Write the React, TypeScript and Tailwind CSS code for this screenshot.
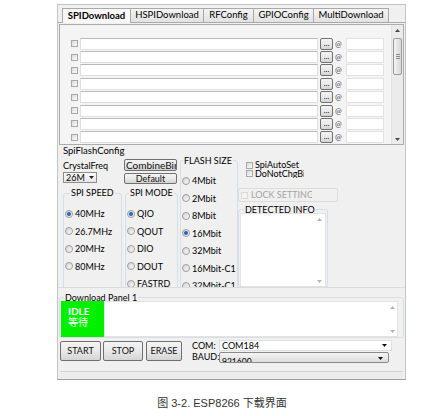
import React from 'react';

const UI = "font-['Lato','Noto_Sans_CJK_SC',sans-serif]";

function Tri({ up, color = '#4a4a4a' }: { up?: boolean; color?: string }) {
  return (
    <svg width="5" height="3" viewBox="0 0 5 3">
      <path d={up ? 'M0 3L2.5 0L5 3Z' : 'M0 0L5 0L2.5 3Z'} fill={color} />
    </svg>
  );
}

function Check({ disabled }: { disabled?: boolean }) {
  return (
    <span
      className={`block w-[7px] h-[7px] shrink-0 border ${
        disabled ? 'border-[#dadada] bg-[#f3f3f3]' : 'border-[#a8a8a8] bg-linear-to-br from-[#dadada] to-[#fbfbfb]'
      }`}
    />
  );
}

function Radio({ on }: { on?: boolean }) {
  return (
    <span className="flex w-[8px] h-[8px] shrink-0 items-center justify-center rounded-full border border-[#9c9c9c] bg-linear-to-br from-[#d3d3d3] to-[#fbfbfb]">
      {on && <span className="block w-[4px] h-[4px] rounded-full bg-[#2563c0]" />}
    </span>
  );
}

function VScroll({ thumb, light, className = '' }: { thumb?: boolean; light?: boolean; className?: string }) {
  const c = light ? '#b4b4b4' : '#4a4a4a';
  return (
    <div className={`flex flex-col items-center ${className}`}>
      <div className="h-[10px] flex items-center justify-center">
        <Tri up color={c} />
      </div>
      {thumb && (
        <div className="mt-[3px] w-[9px] h-[37px] rounded-[2px] border border-[#9a9a9a] bg-linear-to-r from-[#f3f3f3] to-[#d9d9d9] flex flex-col items-center justify-center gap-[1px]">
          <span className="block w-[4px] h-px bg-[#8a8a8a]" />
          <span className="block w-[4px] h-px bg-[#8a8a8a]" />
          <span className="block w-[4px] h-px bg-[#8a8a8a]" />
        </div>
      )}
      <div className="flex-1" />
      <div className="h-[10px] flex items-center justify-center">
        <Tri color={c} />
      </div>
    </div>
  );
}

function RadioRow({ label, on }: { label: string; on?: boolean }) {
  return (
    <div className="flex items-center h-[17.5px] gap-[2px] whitespace-nowrap">
      <Radio on={on} />
      <span>{label}</span>
    </div>
  );
}

const tabs = [
  { label: 'SPIDownload', w: 'w-[69px]', active: true },
  { label: 'HSPIDownload', w: 'w-[74px]' },
  { label: 'RFConfig', w: 'w-[51px]' },
  { label: 'GPIOConfig', w: 'w-[61px]' },
  { label: 'MultiDownload', w: 'w-[76px]' },
];

const btn =
  'flex items-center justify-center border border-[#707070] rounded-[2px] bg-linear-to-b from-[#f4f4f4] via-[#e9e9e9] to-[#d4d4d4] text-[#111]';

export default function App() {
  return (
    <div className={`w-[444px] h-[416px] bg-white pt-[4px] pl-[57px] text-[9px] text-black ${UI}`}>
      <div className="w-[349px] h-[376px] bg-[#f0f0f0] border border-[#c4c4c4] border-b-[#9c9c9c] flex flex-col">
        {/* tabs */}
        <div className="h-[17px] pl-[4px] flex items-end">
          {tabs.map((t) => (
            <div
              key={t.label}
              className={`${t.w} flex items-center justify-center border border-b-0 border-[#a9a9a9] text-[9.5px] whitespace-nowrap ${
                t.active
                  ? 'relative z-10 h-[15px] -mb-px bg-[#f8f8f8] font-bold'
                  : 'h-[14px] -ml-px bg-linear-to-b from-[#f4f4f4] to-[#e2e2e2]'
              }`}
            >
              {t.label}
            </div>
          ))}
        </div>

        <div className="flex-1 flex flex-col border-t border-[#a9a9a9] pt-px">
          {/* file list */}
          <div className="mx-px h-[121px] border border-[#adadad] bg-[#f4f4f4] flex">
            <div className="flex-1 pt-[12px] pl-[11px] flex flex-col">
              {Array.from({ length: 8 }).map((_, i) => (
                <div key={i} className="h-[13.5px] flex items-center">
                  <Check />
                  <div className="ml-[2px] w-[238px] h-[12px] bg-white border border-[#dfdfdf] border-t-[#b9b9b9]" />
                  <div className={`${btn} ml-[2px] w-[13px] h-[12px] text-[8px] leading-none pb-[2px]`}>...</div>
                  <span className="ml-[2px] w-[9px] text-[8px] text-[#444]">@</span>
                  <div className="ml-[2px] w-[38px] h-[12px] bg-white border border-[#e2e2e2]" />
                </div>
              ))}
            </div>
            <VScroll thumb className="w-[12px] bg-[#ebebeb] border-l border-[#e2e2e2]" />
          </div>

          {/* SpiFlashConfig */}
          <div className="h-[143px] overflow-hidden border-b border-[#dcdcdc]">
            <div className="h-[11px] leading-[11px] pl-[5px] flex items-center text-[9.5px]">
              <span>SpiFlashConfig</span>
            </div>
            <div className="flex pl-[5px]">
              {/* col 1 */}
              <div className="w-[60px] flex flex-col">
                <div className="mt-[4px] h-[11px] leading-[11px]">CrystalFreq</div>
                <div className="mt-[1px] w-[34px] h-[11px] border border-[#8c8c8c] bg-linear-to-b from-[#fafafa] to-[#e6e6e6] flex items-center justify-between px-[2px]">
                  <span className="leading-none">26M</span>
                  <Tri color="#222" />
                </div>
                <fieldset className="mt-[5px] w-[59px] h-[120px] border border-[#d5dfe5] rounded-[3px] px-px">
                  <legend className="ml-[5px] px-px h-[10px] leading-[10px] whitespace-nowrap">SPI SPEED</legend>
                  <div className="pt-[7px]">
                    <RadioRow label="40MHz" on />
                    <RadioRow label="26.7MHz" />
                    <RadioRow label="20MHz" />
                    <RadioRow label="80MHz" />
                  </div>
                </fieldset>
              </div>

              {/* col 2 */}
              <div className="ml-px w-[54px] flex flex-col">
                <div className={`${btn} mt-[3px] w-[53px] h-[12px] overflow-hidden whitespace-nowrap justify-start pl-[1px] text-[10px]`}>CombineBin</div>
                <div className={`${btn} mt-[2px] w-[53px] h-[11px]`}>Default</div>
                <fieldset className="mt-[4px] ml-px w-[53px] h-[120px] border border-[#d5dfe5] rounded-[3px] px-px">
                  <legend className="ml-[2px] px-px h-[10px] leading-[10px] whitespace-nowrap">SPI MODE</legend>
                  <div className="pt-[7px]">
                    <RadioRow label="QIO" on />
                    <RadioRow label="QOUT" />
                    <RadioRow label="DIO" />
                    <RadioRow label="DOUT" />
                    <RadioRow label="FASTRD" />
                  </div>
                </fieldset>
              </div>

              {/* col 3 */}
              <div className="ml-[2px] w-[57px]">
                <fieldset className="w-[57px] h-[160px] border border-[#d5dfe5] rounded-[3px] px-px overflow-hidden">
                  <legend className="ml-[1px] px-px h-[9px] leading-[9px] whitespace-nowrap">FLASH SIZE</legend>
                  <div className="pt-[7px]">
                    <RadioRow label="4Mbit" />
                    <RadioRow label="2Mbit" />
                    <RadioRow label="8Mbit" />
                    <RadioRow label="16Mbit" on />
                    <RadioRow label="32Mbit" />
                    <RadioRow label="16Mbit-C1" />
                    <RadioRow label="32Mbit-C1" />
                  </div>
                </fieldset>
              </div>

              {/* col 4 */}
              <div className="ml-px w-[102px] flex flex-col">
                <div className="mt-[5px] pl-[8px]">
                  <div className="h-[8.5px] leading-[8.5px] flex items-center gap-[2px]">
                    <Check />
                    <span>SpiAutoSet</span>
                  </div>
                  <div className="h-[8.5px] leading-[8.5px] flex items-center gap-[2px]">
                    <Check />
                    <span className="w-[49px] overflow-hidden whitespace-nowrap">DoNotChgBin</span>
                  </div>
                </div>
                <div className="mt-[10px] w-[100px] h-[14px] border border-[#dcdcdc] rounded-[2px] flex items-center pl-[2px] gap-[3px]">
                  <Check disabled />
                  <span className="w-[61px] overflow-hidden whitespace-nowrap text-[#a3a3a3]">LOCK SETTING</span>
                </div>
                <fieldset className="mt-[3px] w-[89px] border border-[#d5dfe5] rounded-[3px] px-px">
                  <legend className="ml-[4px] px-px h-[8px] leading-[10px] overflow-hidden whitespace-nowrap">DETECTED INFO</legend>
                  <div className="w-[86px] h-[74px] bg-white border border-[#e3e3e3] flex justify-end">
                    <VScroll light className="w-[12px]" />
                  </div>
                </fieldset>
              </div>
            </div>
          </div>

          {/* Download panel */}
          <fieldset className="mt-[6px] mx-px border border-[#d5dfe5] rounded-[3px] px-px">
            <legend className="ml-[3px] px-px h-[7px] leading-[7px] whitespace-nowrap">Download Panel 1</legend>
            <div className="flex">
              <div className="w-[43px] h-[36px] bg-[#00f000] text-white font-bold text-[10px] leading-[11px] pl-[7px] pt-[5px]">
                <div>IDLE</div>
                <div className="font-normal">等待</div>
              </div>
              <div className="w-[294px] h-[36px] bg-white border border-[#e3e3e3] flex justify-end">
                <VScroll light className="w-[10px]" />
              </div>
            </div>
          </fieldset>

          {/* buttons */}
          <div className="mt-[2px] px-[2px] flex items-start">
            <div className={`${btn} mt-px w-[41px] h-[20px]`}>START</div>
            <div className={`${btn} mt-px ml-[2px] w-[40px] h-[20px]`}>STOP</div>
            <div className={`${btn} mt-px ml-[3px] w-[36px] h-[20px]`}>ERASE</div>
            <div className="ml-[10px] flex flex-col">
              <div className="h-[11px] flex items-center">
                <span className="w-[27px]">COM:</span>
                <div className="w-[173px] h-[11px] bg-white border border-[#e0e0e0] flex items-center justify-between pl-[2px] pr-[4px]">
                  <span className="leading-none">COM184</span>
                  <Tri color="#111" />
                </div>
              </div>
              <div className="h-[12px] flex items-center">
                <span className="w-[27px]">BAUD:</span>
                <div className="w-[170px] h-[11px] border border-[#8a8a8a] rounded-[2px] bg-linear-to-b from-[#f4f4f4] to-[#dcdcdc] flex items-start justify-between pl-[2px] pr-[5px] overflow-hidden">
                  <span className="leading-none mt-[5px] text-[8.5px]">921600</span>
                  <span className="mt-[4px]">
                    <Tri color="#111" />
                  </span>
                </div>
              </div>
            </div>
          </div>

          <div className="mt-auto mx-[2px] h-[8px] border-t border-[#d2d2d2] bg-[#ececec]" />
        </div>
      </div>

      <div className="mt-[17px] -ml-[57px] h-[13px] leading-[13px] text-center text-[11px] text-[#333] font-['Liberation_Sans','Noto_Sans_CJK_SC',sans-serif]">
        图 3-2. ESP8266 下载界面
      </div>
    </div>
  );
}
